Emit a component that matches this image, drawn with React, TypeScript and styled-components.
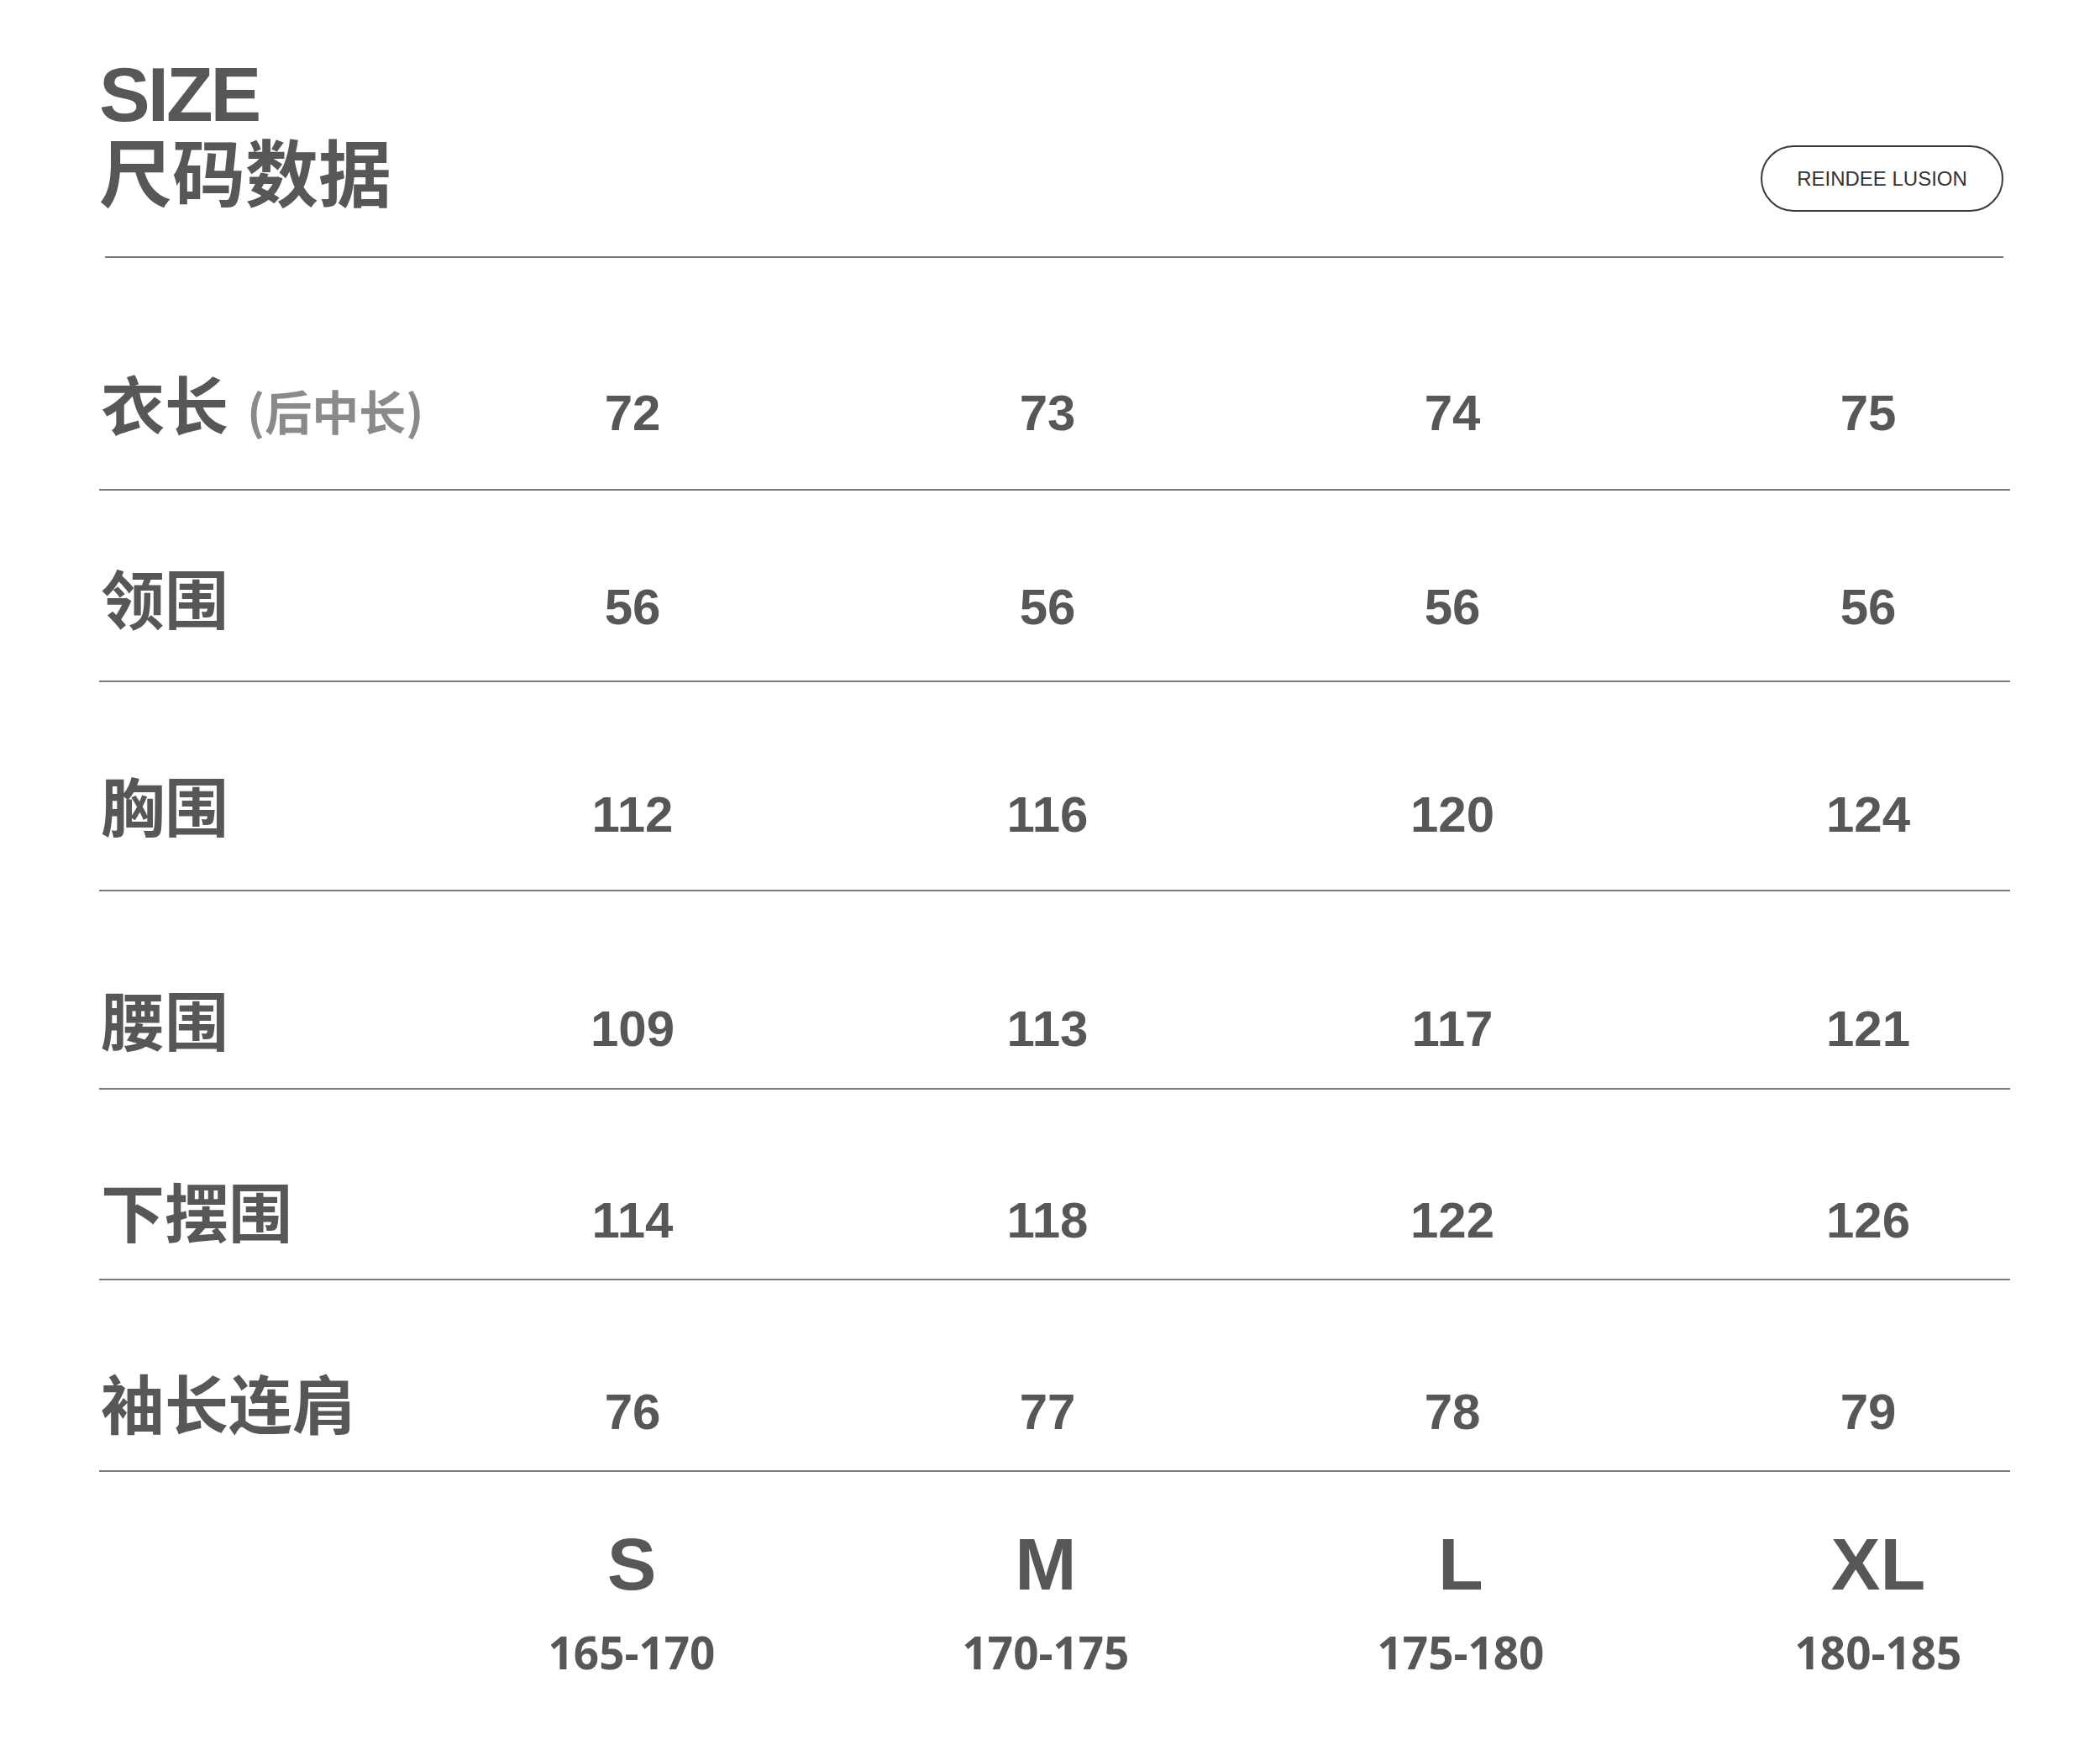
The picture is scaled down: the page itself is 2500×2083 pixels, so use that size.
import { createGlobalStyle, styled } from "styled-components";

type Row = {
  label: string;
  note?: string;
  values: string[];
  height: number;
  padTop: number;
};

const rows: Row[] = [
  { label: "衣长", note: "(后中长)", values: ["72", "73", "74", "75"], height: 277, padTop: 134 },
  { label: "领围", values: ["56", "56", "56", "56"], height: 228, padTop: 88 },
  { label: "胸围", values: ["112", "116", "120", "124"], height: 249, padTop: 107 },
  { label: "腰围", values: ["109", "113", "117", "121"], height: 236, padTop: 113 },
  { label: "下摆围", values: ["114", "118", "122", "126"], height: 227, padTop: 105 },
  { label: "袖长连肩", values: ["76", "77", "78", "79"], height: 228, padTop: 106 },
];

const sizes = [
  { name: "S", range: "165-170" },
  { name: "M", range: "170-175" },
  { name: "L", range: "175-180" },
  { name: "XL", range: "180-185" },
];

const App = () => {
  return (
    <>
      <GlobalStyle />
      <Page>
        <Header>
          <TitleBlock>
            <Title>SIZE</Title>
            <SubTitle>尺码数据</SubTitle>
          </TitleBlock>
          <Badge>REINDEE LUSION</Badge>
        </Header>
        <Divider />

        <Table>
          {rows.map((row) => (
            <TableRow key={row.label} $height={row.height} $padTop={row.padTop}>
              <Label>
                {row.label}
                {row.note && <Note>{row.note}</Note>}
              </Label>
              {row.values.map((v, i) => (
                <Value key={i}>{v}</Value>
              ))}
            </TableRow>
          ))}
        </Table>

        <SizeRow>
          <span />
          {sizes.map((s) => (
            <SizeCell key={s.name}>
              <SizeName>{s.name}</SizeName>
              <SizeRange>{s.range}</SizeRange>
            </SizeCell>
          ))}
        </SizeRow>
      </Page>
    </>
  );
};

export default App;

const GlobalStyle = createGlobalStyle`
  * {
    box-sizing: border-box;
  }
  body {
    margin: 0;
    background: #ffffff;
    font-family: "Liberation Sans", Arial, "Noto Sans CJK SC", sans-serif;
  }
`;

const Page = styled.div`
  width: 2500px;
  min-height: 2083px;
  padding: 68px 0 90px 118px;
  background: #ffffff;
`;

const Header = styled.div`
  width: 2267px;
  display: flex;
  justify-content: space-between;
  align-items: flex-start;
`;

const TitleBlock = styled.div`
  display: flex;
  flex-direction: column;
`;

const Title = styled.div`
  font-family: "Liberation Sans", Arial, sans-serif;
  font-weight: 700;
  font-size: 91px;
  line-height: 90px;
  letter-spacing: -3px;
  color: #575757;
`;

const SubTitle = styled.div`
  margin-top: 2px;
  font-family: "Noto Sans CJK SC", sans-serif;
  font-weight: 700;
  font-size: 87px;
  line-height: 85px;
  color: #575757;
`;

const Badge = styled.div`
  margin-top: 105px;
  width: 289px;
  height: 79px;
  border: 2px solid #3a3a3a;
  border-radius: 40px;
  display: flex;
  align-items: center;
  justify-content: center;
  font-family: "Liberation Sans", Arial, sans-serif;
  font-size: 24px;
  color: #333333;
`;

const Divider = styled.div`
  margin: 53px 0 0 7px;
  width: 2260px;
  height: 2px;
  background: #7a7a7a;
`;

const Table = styled.div`
  width: 2275px;
  display: flex;
  flex-direction: column;
`;

const TableRow = styled.div<{ $height: number; $padTop: number }>`
  height: ${(p) => p.$height}px;
  padding-top: ${(p) => p.$padTop}px;
  border-bottom: 2px solid #7a7a7a;
  display: grid;
  grid-template-columns: 388px 494px 494px 470px 520px;
  align-items: baseline;
  align-content: start;
`;

const Label = styled.div`
  padding-left: 2px;
  font-family: "Noto Sans CJK SC", sans-serif;
  font-weight: 700;
  font-size: 76px;
  line-height: 1;
  color: #575757;
  white-space: nowrap;
`;

const Note = styled.span`
  margin-left: 22px;
  font-size: 56px;
  color: #8a8a8a;
`;

const Value = styled.div`
  text-align: center;
  font-family: "Liberation Sans", Arial, sans-serif;
  font-weight: 700;
  font-size: 60px;
  line-height: 1;
  color: #575757;
`;

const SizeRow = styled.div`
  padding-top: 66px;
  display: grid;
  grid-template-columns: 388px 492px 494px 494px 500px;
`;

const SizeCell = styled.div`
  display: flex;
  flex-direction: column;
  align-items: center;
  gap: 34px;
`;

const SizeName = styled.div`
  font-family: "Liberation Sans", Arial, sans-serif;
  font-weight: 700;
  font-size: 88px;
  line-height: 1;
  color: #575757;
`;

const SizeRange = styled.div`
  font-family: "Open Sans", "Liberation Sans", sans-serif;
  font-weight: 700;
  font-size: 53px;
  line-height: 1;
  color: #575757;
`;
